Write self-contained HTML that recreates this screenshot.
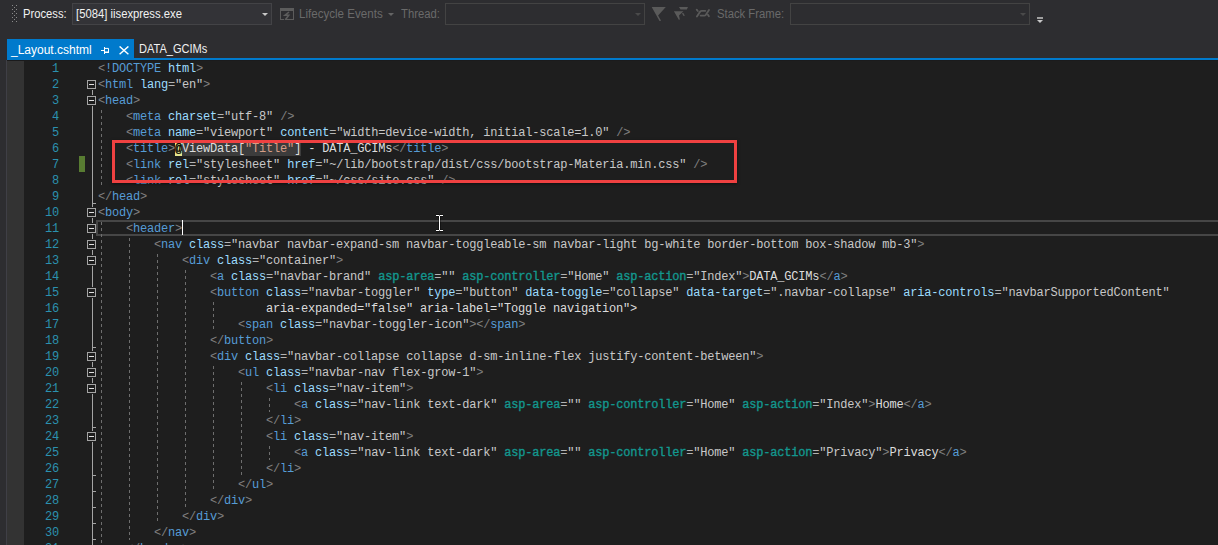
<!DOCTYPE html>
<html><head><meta charset="utf-8"><style>
*{margin:0;padding:0;box-sizing:border-box}
html,body{width:1218px;height:545px;overflow:hidden}
body{position:relative;background:#2d2d30;font-family:"Liberation Sans",sans-serif}
.a{position:absolute}
.ui{font-size:12px;white-space:nowrap;line-height:14px}
.dd{position:absolute;height:22px;border:1px solid #434346;background:#333337}
.arr{position:absolute;width:0;height:0;border-left:3px solid transparent;border-right:3px solid transparent;border-top:3px solid #999}
.ed{position:absolute;left:7px;top:60px;width:1211px;height:485px;background:#1e1e1e;overflow:hidden}
.ln{position:absolute;left:91px;height:16px;line-height:16px;white-space:pre;font-family:"Liberation Mono",monospace;font-size:12px;letter-spacing:-0.2px;color:#dcdcdc}
.nm{position:absolute;left:0;width:52px;text-align:right;height:16px;line-height:16px;font-family:"Liberation Mono",monospace;font-size:12px;letter-spacing:-0.2px;color:#2b91af}
i{font-style:normal}
.d{color:#808080}.t{color:#569cd6}.aa{color:#9cdcfe}.o{color:#b4b4b4}.v{color:#c8c8c8}.x{color:#dcdcdc}
.h{color:#13978e;-webkit-text-stroke:0.35px #13978e}
.rz{background:#e4e48e;color:#000;-webkit-text-stroke:0.4px #000}
.rzv{background:#3c3c3c;color:#dcdcdc}.rzo{background:#3c3c3c;color:#dcdcdc}.rzs{background:#3c3c3c;color:#d69d85}
.box{position:absolute;left:80px;width:9px;height:9px;border:1px solid #a5a5a5;background:#1e1e1e;box-shadow:0 -1px 0 #1e1e1e,0 1px 0 #1e1e1e}
.box::after{content:"";position:absolute;left:1px;top:3px;width:5px;height:1px;background:#e0e0e0}
.vl{position:absolute;left:85px;width:1px;background:#a5a5a5}
.tk{position:absolute;left:85px;width:4px;height:1px;background:#a5a5a5}
.ig{position:absolute;width:1px;background-image:linear-gradient(to bottom,#6e6e6e 0,#6e6e6e 3px,transparent 3px,transparent 6px);background-size:1px 6px}
</style></head><body>
<div class="a" style="left:12px;top:5px;width:1px;height:1px;background:#8a8a8a"></div>
<div class="a" style="left:16px;top:5px;width:1px;height:1px;background:#8a8a8a"></div>
<div class="a" style="left:12px;top:9px;width:1px;height:1px;background:#8a8a8a"></div>
<div class="a" style="left:16px;top:9px;width:1px;height:1px;background:#8a8a8a"></div>
<div class="a" style="left:12px;top:13px;width:1px;height:1px;background:#8a8a8a"></div>
<div class="a" style="left:16px;top:13px;width:1px;height:1px;background:#8a8a8a"></div>
<div class="a" style="left:12px;top:17px;width:1px;height:1px;background:#8a8a8a"></div>
<div class="a" style="left:16px;top:17px;width:1px;height:1px;background:#8a8a8a"></div>
<div class="a" style="left:12px;top:21px;width:1px;height:1px;background:#8a8a8a"></div>
<div class="a" style="left:16px;top:21px;width:1px;height:1px;background:#8a8a8a"></div>
<div class="a" style="left:14px;top:7px;width:1px;height:1px;background:#8a8a8a"></div>
<div class="a" style="left:14px;top:11px;width:1px;height:1px;background:#8a8a8a"></div>
<div class="a" style="left:14px;top:15px;width:1px;height:1px;background:#8a8a8a"></div>
<div class="a" style="left:14px;top:19px;width:1px;height:1px;background:#8a8a8a"></div>
<div class="a ui" style="left:23px;top:7px;color:#f1f1f1;transform:scaleX(0.935);transform-origin:0 0">Process:</div>
<div class="dd" style="left:72px;top:3px;width:200px"></div>
<div class="a ui" style="left:76px;top:7px;color:#f1f1f1;transform:scaleX(0.94);transform-origin:0 0">[5084] iisexpress.exe</div>
<div class="arr" style="left:262px;top:13px;border-top-color:#c8c8c8"></div>
<svg class="a" style="left:280px;top:8px" width="14" height="12" viewBox="0 0 14 12"><path fill="#5c5c5c" d="M0 0H14V12H6V11H13V3H1V11H4V12H0Z"/><path fill="none" stroke="#5c5c5c" stroke-width="1.6" d="M9 4L5 7.3H8.7L5.2 12"/></svg>
<div class="a ui" style="left:299px;top:7px;color:#6a6a6a;transform:scaleX(0.965);transform-origin:0 0">Lifecycle Events</div>
<div class="arr" style="left:388px;top:13px;border-top-color:#656565"></div>
<div class="a ui" style="left:401px;top:7px;color:#6a6a6a;transform:scaleX(0.94);transform-origin:0 0">Thread:</div>
<div class="dd" style="left:445px;top:3px;width:200px;border-color:#434343;background:#2d2d30"></div>
<div class="arr" style="left:635px;top:13px;border-top-color:#4a4a4a"></div>
<svg class="a" style="left:646px;top:2px" width="70" height="24" viewBox="646 2 70 24"><g fill="#5a5a5a"><path d="M651.7 6.9H665.8L658.1 15.5L661.1 20.7L659.5 21Z"/><path d="M679 6.9H688L686.8 9.5H680.5Z"/><path d="M673.9 11.2H683.4L679 15.5L679.9 19.5L678.8 19.8Z"/><path d="M681.9 13.2L683.4 12.9L684.8 15.8L683.6 16.1Z"/></g><g fill="none" stroke="#5a5a5a" stroke-width="1.8" stroke-linecap="round"><path d="M696.9 16.6L700.3 11.4Q700.8 10.8 701.8 10.8L705.3 10.8"/><path d="M700.6 15.6L704.2 15.6Q705.2 15.6 705.7 15L709 10"/><path d="M696.7 9.7L697.8 11"/><path d="M707.9 14.8L708.9 16.3"/></g></svg>
<div class="a ui" style="left:717px;top:7px;color:#6a6a6a;transform:scaleX(0.94);transform-origin:0 0">Stack Frame:</div>
<div class="dd" style="left:790px;top:3px;width:240px;border-color:#434343;background:#2d2d30"></div>
<div class="arr" style="left:1020px;top:13px;border-top-color:#4a4a4a"></div>
<div class="a" style="left:1037px;top:17px;width:6px;height:2px;background:#a0a0a0"></div>
<div class="arr" style="left:1037px;top:20px;border-top-color:#c8c8c8;border-left-width:3px;border-right-width:3px;border-top-width:3px"></div>
<div class="a" style="left:7px;top:39px;width:127px;height:21px;background:#007acc"></div>
<div class="a" style="left:7px;top:58px;width:1211px;height:2px;background:#007acc"></div>
<div class="a ui" style="left:11px;top:43px;color:#ffffff">_Layout.cshtml</div>
<svg class="a" style="left:101px;top:46px" width="9" height="9" viewBox="0 0 9 9"><path d="M0 4.5H3.5M3.5 1V8M3.5 2.4H7.5V6.2H3.5" stroke="#ffffff" stroke-width="1" fill="none"/><rect x="3.5" y="5.7" width="4.5" height="1.3" fill="#fff"/></svg>
<svg class="a" style="left:119px;top:46px" width="10" height="9" viewBox="0 0 10 9"><path d="M0.6 0.4L9.4 8.2M9.4 0.4L0.6 8.2" stroke="#ffffff" stroke-width="1.4" fill="none"/></svg>
<div class="a ui" style="left:139px;top:42px;color:#f1f1f1;transform:scaleX(0.92);transform-origin:0 0">DATA_GCIMs</div>
<div class="a" style="left:6px;top:60px;width:1px;height:485px;background:#3f3f46"></div>
<div class="ed">
<div class="a" style="left:0;top:0;width:17px;height:485px;background:#333333"></div>
<div class="a" style="left:0;top:0;width:1211px;height:1px;background:#1b1b1c"></div>
<div class="a" style="left:89px;top:160px;width:1200px;height:16px;border:2px solid #464646;border-right:none"></div>
<div class="a" style="left:72px;top:96px;width:6px;height:16px;background:#587c32"></div>
<div class="ig" style="left:94px;top:48px;height:16px;background-position:0 2px"></div>
<div class="ig" style="left:94px;top:64px;height:16px;background-position:0 4px"></div>
<div class="ig" style="left:94px;top:80px;height:16px;background-position:0 0px"></div>
<div class="ig" style="left:94px;top:96px;height:16px;background-position:0 2px"></div>
<div class="ig" style="left:94px;top:112px;height:16px;background-position:0 4px"></div>
<div class="ig" style="left:94px;top:160px;height:16px;background-position:0 2px"></div>
<div class="ig" style="left:94px;top:176px;height:16px;background-position:0 4px"></div>
<div class="ig" style="left:94px;top:192px;height:16px;background-position:0 0px"></div>
<div class="ig" style="left:94px;top:208px;height:16px;background-position:0 2px"></div>
<div class="ig" style="left:94px;top:224px;height:16px;background-position:0 4px"></div>
<div class="ig" style="left:94px;top:240px;height:16px;background-position:0 0px"></div>
<div class="ig" style="left:94px;top:256px;height:16px;background-position:0 2px"></div>
<div class="ig" style="left:94px;top:272px;height:16px;background-position:0 4px"></div>
<div class="ig" style="left:94px;top:288px;height:16px;background-position:0 0px"></div>
<div class="ig" style="left:94px;top:304px;height:16px;background-position:0 2px"></div>
<div class="ig" style="left:94px;top:320px;height:16px;background-position:0 4px"></div>
<div class="ig" style="left:94px;top:336px;height:16px;background-position:0 0px"></div>
<div class="ig" style="left:94px;top:352px;height:16px;background-position:0 2px"></div>
<div class="ig" style="left:94px;top:368px;height:16px;background-position:0 4px"></div>
<div class="ig" style="left:94px;top:384px;height:16px;background-position:0 0px"></div>
<div class="ig" style="left:94px;top:400px;height:16px;background-position:0 2px"></div>
<div class="ig" style="left:94px;top:416px;height:16px;background-position:0 4px"></div>
<div class="ig" style="left:94px;top:432px;height:16px;background-position:0 0px"></div>
<div class="ig" style="left:94px;top:448px;height:16px;background-position:0 2px"></div>
<div class="ig" style="left:94px;top:464px;height:16px;background-position:0 4px"></div>
<div class="ig" style="left:94px;top:480px;height:16px;background-position:0 0px"></div>
<div class="ig" style="left:122px;top:176px;height:16px;background-position:0 2px"></div>
<div class="ig" style="left:122px;top:192px;height:16px;background-position:0 4px"></div>
<div class="ig" style="left:122px;top:208px;height:16px;background-position:0 0px"></div>
<div class="ig" style="left:122px;top:224px;height:16px;background-position:0 2px"></div>
<div class="ig" style="left:122px;top:240px;height:16px;background-position:0 4px"></div>
<div class="ig" style="left:122px;top:256px;height:16px;background-position:0 0px"></div>
<div class="ig" style="left:122px;top:272px;height:16px;background-position:0 2px"></div>
<div class="ig" style="left:122px;top:288px;height:16px;background-position:0 4px"></div>
<div class="ig" style="left:122px;top:304px;height:16px;background-position:0 0px"></div>
<div class="ig" style="left:122px;top:320px;height:16px;background-position:0 2px"></div>
<div class="ig" style="left:122px;top:336px;height:16px;background-position:0 4px"></div>
<div class="ig" style="left:122px;top:352px;height:16px;background-position:0 0px"></div>
<div class="ig" style="left:122px;top:368px;height:16px;background-position:0 2px"></div>
<div class="ig" style="left:122px;top:384px;height:16px;background-position:0 4px"></div>
<div class="ig" style="left:122px;top:400px;height:16px;background-position:0 0px"></div>
<div class="ig" style="left:122px;top:416px;height:16px;background-position:0 2px"></div>
<div class="ig" style="left:122px;top:432px;height:16px;background-position:0 4px"></div>
<div class="ig" style="left:122px;top:448px;height:16px;background-position:0 0px"></div>
<div class="ig" style="left:122px;top:464px;height:16px;background-position:0 2px"></div>
<div class="ig" style="left:150px;top:192px;height:16px;background-position:0 2px"></div>
<div class="ig" style="left:150px;top:208px;height:16px;background-position:0 4px"></div>
<div class="ig" style="left:150px;top:224px;height:16px;background-position:0 0px"></div>
<div class="ig" style="left:150px;top:240px;height:16px;background-position:0 2px"></div>
<div class="ig" style="left:150px;top:256px;height:16px;background-position:0 4px"></div>
<div class="ig" style="left:150px;top:272px;height:16px;background-position:0 0px"></div>
<div class="ig" style="left:150px;top:288px;height:16px;background-position:0 2px"></div>
<div class="ig" style="left:150px;top:304px;height:16px;background-position:0 4px"></div>
<div class="ig" style="left:150px;top:320px;height:16px;background-position:0 0px"></div>
<div class="ig" style="left:150px;top:336px;height:16px;background-position:0 2px"></div>
<div class="ig" style="left:150px;top:352px;height:16px;background-position:0 4px"></div>
<div class="ig" style="left:150px;top:368px;height:16px;background-position:0 0px"></div>
<div class="ig" style="left:150px;top:384px;height:16px;background-position:0 2px"></div>
<div class="ig" style="left:150px;top:400px;height:16px;background-position:0 4px"></div>
<div class="ig" style="left:150px;top:416px;height:16px;background-position:0 0px"></div>
<div class="ig" style="left:150px;top:432px;height:16px;background-position:0 2px"></div>
<div class="ig" style="left:150px;top:448px;height:16px;background-position:0 4px"></div>
<div class="ig" style="left:178px;top:208px;height:16px;background-position:0 2px"></div>
<div class="ig" style="left:178px;top:224px;height:16px;background-position:0 4px"></div>
<div class="ig" style="left:178px;top:240px;height:16px;background-position:0 0px"></div>
<div class="ig" style="left:178px;top:256px;height:16px;background-position:0 2px"></div>
<div class="ig" style="left:178px;top:272px;height:16px;background-position:0 4px"></div>
<div class="ig" style="left:178px;top:288px;height:16px;background-position:0 0px"></div>
<div class="ig" style="left:178px;top:304px;height:16px;background-position:0 2px"></div>
<div class="ig" style="left:178px;top:320px;height:16px;background-position:0 4px"></div>
<div class="ig" style="left:178px;top:336px;height:16px;background-position:0 0px"></div>
<div class="ig" style="left:178px;top:352px;height:16px;background-position:0 2px"></div>
<div class="ig" style="left:178px;top:368px;height:16px;background-position:0 4px"></div>
<div class="ig" style="left:178px;top:384px;height:16px;background-position:0 0px"></div>
<div class="ig" style="left:178px;top:400px;height:16px;background-position:0 2px"></div>
<div class="ig" style="left:178px;top:416px;height:16px;background-position:0 4px"></div>
<div class="ig" style="left:178px;top:432px;height:16px;background-position:0 0px"></div>
<div class="ig" style="left:206px;top:240px;height:16px;background-position:0 2px"></div>
<div class="ig" style="left:206px;top:256px;height:16px;background-position:0 4px"></div>
<div class="ig" style="left:206px;top:304px;height:16px;background-position:0 2px"></div>
<div class="ig" style="left:206px;top:320px;height:16px;background-position:0 4px"></div>
<div class="ig" style="left:206px;top:336px;height:16px;background-position:0 0px"></div>
<div class="ig" style="left:206px;top:352px;height:16px;background-position:0 2px"></div>
<div class="ig" style="left:206px;top:368px;height:16px;background-position:0 4px"></div>
<div class="ig" style="left:206px;top:384px;height:16px;background-position:0 0px"></div>
<div class="ig" style="left:206px;top:400px;height:16px;background-position:0 2px"></div>
<div class="ig" style="left:206px;top:416px;height:16px;background-position:0 4px"></div>
<div class="ig" style="left:234px;top:320px;height:16px;background-position:0 2px"></div>
<div class="ig" style="left:234px;top:336px;height:16px;background-position:0 4px"></div>
<div class="ig" style="left:234px;top:352px;height:16px;background-position:0 0px"></div>
<div class="ig" style="left:234px;top:368px;height:16px;background-position:0 2px"></div>
<div class="ig" style="left:234px;top:384px;height:16px;background-position:0 4px"></div>
<div class="ig" style="left:234px;top:400px;height:16px;background-position:0 0px"></div>
<div class="ig" style="left:262px;top:336px;height:16px;background-position:0 2px"></div>
<div class="ig" style="left:262px;top:384px;height:16px;background-position:0 2px"></div>
<div class="vl" style="top:29px;height:456px"></div>
<div class="tk" style="top:143px"></div>
<div class="tk" style="top:287px"></div>
<div class="tk" style="top:367px"></div>
<div class="tk" style="top:415px"></div>
<div class="tk" style="top:431px"></div>
<div class="tk" style="top:447px"></div>
<div class="tk" style="top:463px"></div>
<div class="tk" style="top:479px"></div>
<div class="box" style="top:20px"></div>
<div class="box" style="top:36px"></div>
<div class="box" style="top:148px"></div>
<div class="box" style="top:164px"></div>
<div class="box" style="top:180px"></div>
<div class="box" style="top:196px"></div>
<div class="box" style="top:228px"></div>
<div class="box" style="top:292px"></div>
<div class="box" style="top:308px"></div>
<div class="box" style="top:324px"></div>
<div class="box" style="top:372px"></div>
<div class="nm" style="top:1px">1</div>
<div class="ln" style="top:1px"><i class="d">&lt;</i><i class="t">!</i><i class="t">DOCTYPE</i> <i class="aa">html</i><i class="d">&gt;</i></div>
<div class="nm" style="top:17px">2</div>
<div class="ln" style="top:17px"><i class="d">&lt;</i><i class="t">html</i> <i class="aa">lang</i><i class="o">=</i><i class="v">"en"</i><i class="d">&gt;</i></div>
<div class="nm" style="top:33px">3</div>
<div class="ln" style="top:33px"><i class="d">&lt;</i><i class="t">head</i><i class="d">&gt;</i></div>
<div class="nm" style="top:49px">4</div>
<div class="ln" style="top:49px">    <i class="d">&lt;</i><i class="t">meta</i> <i class="aa">charset</i><i class="o">=</i><i class="v">"utf-8"</i> <i class="d">/&gt;</i></div>
<div class="nm" style="top:65px">5</div>
<div class="ln" style="top:65px">    <i class="d">&lt;</i><i class="t">meta</i> <i class="aa">name</i><i class="o">=</i><i class="v">"viewport"</i> <i class="aa">content</i><i class="o">=</i><i class="v">"width=device-width, initial-scale=1.0"</i> <i class="d">/&gt;</i></div>
<div class="nm" style="top:81px">6</div>
<div class="ln" style="top:81px">    <i class="d">&lt;</i><i class="t">title</i><i class="d">&gt;</i><i class="rz">@</i><i class="rzv">ViewData</i><i class="rzo">[</i><i class="rzs">"Title"</i><i class="rzo">]</i> <i class="x">- DATA_GCIMs</i><i class="d">&lt;/</i><i class="t">title</i><i class="d">&gt;</i></div>
<div class="nm" style="top:97px">7</div>
<div class="ln" style="top:97px">    <i class="d">&lt;</i><i class="t">link</i> <i class="aa">rel</i><i class="o">=</i><i class="v">"stylesheet"</i> <i class="aa">href</i><i class="o">=</i><i class="v">"~/lib/bootstrap/dist/css/bootstrap-Materia.min.css"</i> <i class="d">/&gt;</i></div>
<div class="nm" style="top:113px">8</div>
<div class="ln" style="top:113px">    <i class="d">&lt;</i><i class="t">link</i> <i class="aa">rel</i><i class="o">=</i><i class="v">"stylesheet"</i> <i class="aa">href</i><i class="o">=</i><i class="v">"~/css/site.css"</i> <i class="d">/&gt;</i></div>
<div class="nm" style="top:129px">9</div>
<div class="ln" style="top:129px"><i class="d">&lt;/</i><i class="t">head</i><i class="d">&gt;</i></div>
<div class="nm" style="top:145px">10</div>
<div class="ln" style="top:145px"><i class="d">&lt;</i><i class="t">body</i><i class="d">&gt;</i></div>
<div class="nm" style="top:161px">11</div>
<div class="ln" style="top:161px">    <i class="d">&lt;</i><i class="t">header</i><i class="d">&gt;</i></div>
<div class="nm" style="top:177px">12</div>
<div class="ln" style="top:177px">        <i class="d">&lt;</i><i class="t">nav</i> <i class="aa">class</i><i class="o">=</i><i class="v">"navbar navbar-expand-sm navbar-toggleable-sm navbar-light bg-white border-bottom box-shadow mb-3"</i><i class="d">&gt;</i></div>
<div class="nm" style="top:193px">13</div>
<div class="ln" style="top:193px">            <i class="d">&lt;</i><i class="t">div</i> <i class="aa">class</i><i class="o">=</i><i class="v">"container"</i><i class="d">&gt;</i></div>
<div class="nm" style="top:209px">14</div>
<div class="ln" style="top:209px">                <i class="d">&lt;</i><i class="t">a</i> <i class="aa">class</i><i class="o">=</i><i class="v">"navbar-brand"</i> <i class="h">asp-area</i><i class="o">=</i><i class="v">""</i> <i class="h">asp-controller</i><i class="o">=</i><i class="v">"Home"</i> <i class="h">asp-action</i><i class="o">=</i><i class="v">"Index"</i><i class="d">&gt;</i><i class="x">DATA_GCIMs</i><i class="d">&lt;/</i><i class="t">a</i><i class="d">&gt;</i></div>
<div class="nm" style="top:225px">15</div>
<div class="ln" style="top:225px">                <i class="d">&lt;</i><i class="t">button</i> <i class="aa">class</i><i class="o">=</i><i class="v">"navbar-toggler"</i> <i class="aa">type</i><i class="o">=</i><i class="v">"button"</i> <i class="aa">data-toggle</i><i class="o">=</i><i class="v">"collapse"</i> <i class="aa">data-target</i><i class="o">=</i><i class="v">".navbar-collapse"</i> <i class="aa">aria-controls</i><i class="o">=</i><i class="v">"navbarSupportedContent"</i></div>
<div class="nm" style="top:241px">16</div>
<div class="ln" style="top:241px">                        <i class="x">aria-expanded="false" aria-label="Toggle navigation"&gt;</i></div>
<div class="nm" style="top:257px">17</div>
<div class="ln" style="top:257px">                    <i class="d">&lt;</i><i class="t">span</i> <i class="aa">class</i><i class="o">=</i><i class="v">"navbar-toggler-icon"</i><i class="d">&gt;</i><i class="d">&lt;/</i><i class="t">span</i><i class="d">&gt;</i></div>
<div class="nm" style="top:273px">18</div>
<div class="ln" style="top:273px">                <i class="d">&lt;/</i><i class="t">button</i><i class="d">&gt;</i></div>
<div class="nm" style="top:289px">19</div>
<div class="ln" style="top:289px">                <i class="d">&lt;</i><i class="t">div</i> <i class="aa">class</i><i class="o">=</i><i class="v">"navbar-collapse collapse d-sm-inline-flex justify-content-between"</i><i class="d">&gt;</i></div>
<div class="nm" style="top:305px">20</div>
<div class="ln" style="top:305px">                    <i class="d">&lt;</i><i class="t">ul</i> <i class="aa">class</i><i class="o">=</i><i class="v">"navbar-nav flex-grow-1"</i><i class="d">&gt;</i></div>
<div class="nm" style="top:321px">21</div>
<div class="ln" style="top:321px">                        <i class="d">&lt;</i><i class="t">li</i> <i class="aa">class</i><i class="o">=</i><i class="v">"nav-item"</i><i class="d">&gt;</i></div>
<div class="nm" style="top:337px">22</div>
<div class="ln" style="top:337px">                            <i class="d">&lt;</i><i class="t">a</i> <i class="aa">class</i><i class="o">=</i><i class="v">"nav-link text-dark"</i> <i class="h">asp-area</i><i class="o">=</i><i class="v">""</i> <i class="h">asp-controller</i><i class="o">=</i><i class="v">"Home"</i> <i class="h">asp-action</i><i class="o">=</i><i class="v">"Index"</i><i class="d">&gt;</i><i class="x">Home</i><i class="d">&lt;/</i><i class="t">a</i><i class="d">&gt;</i></div>
<div class="nm" style="top:353px">23</div>
<div class="ln" style="top:353px">                        <i class="d">&lt;/</i><i class="t">li</i><i class="d">&gt;</i></div>
<div class="nm" style="top:369px">24</div>
<div class="ln" style="top:369px">                        <i class="d">&lt;</i><i class="t">li</i> <i class="aa">class</i><i class="o">=</i><i class="v">"nav-item"</i><i class="d">&gt;</i></div>
<div class="nm" style="top:385px">25</div>
<div class="ln" style="top:385px">                            <i class="d">&lt;</i><i class="t">a</i> <i class="aa">class</i><i class="o">=</i><i class="v">"nav-link text-dark"</i> <i class="h">asp-area</i><i class="o">=</i><i class="v">""</i> <i class="h">asp-controller</i><i class="o">=</i><i class="v">"Home"</i> <i class="h">asp-action</i><i class="o">=</i><i class="v">"Privacy"</i><i class="d">&gt;</i><i class="x">Privacy</i><i class="d">&lt;/</i><i class="t">a</i><i class="d">&gt;</i></div>
<div class="nm" style="top:401px">26</div>
<div class="ln" style="top:401px">                        <i class="d">&lt;/</i><i class="t">li</i><i class="d">&gt;</i></div>
<div class="nm" style="top:417px">27</div>
<div class="ln" style="top:417px">                    <i class="d">&lt;/</i><i class="t">ul</i><i class="d">&gt;</i></div>
<div class="nm" style="top:433px">28</div>
<div class="ln" style="top:433px">                <i class="d">&lt;/</i><i class="t">div</i><i class="d">&gt;</i></div>
<div class="nm" style="top:449px">29</div>
<div class="ln" style="top:449px">            <i class="d">&lt;/</i><i class="t">div</i><i class="d">&gt;</i></div>
<div class="nm" style="top:465px">30</div>
<div class="ln" style="top:465px">        <i class="d">&lt;/</i><i class="t">nav</i><i class="d">&gt;</i></div>
<div class="nm" style="top:481px">31</div>
<div class="ln" style="top:481px">    <i class="d">&lt;/</i><i class="t">header</i><i class="d">&gt;</i></div>
<div class="a" style="left:175px;top:160px;width:1px;height:15px;background:#ffffff"></div>
</div>
<div class="a" style="left:112px;top:140px;width:625px;height:43px;border:3px solid #ef4141;box-shadow:0 1px 3px rgba(0,0,0,0.5)"></div>
<svg class="a" style="left:434px;top:213px" width="11" height="20" viewBox="0 0 11 20"><path d="M2 2.5 H5.5 M5.5 2.5 H9 M5.5 2.5 V17.5 M2 17.5 H5.5 M5.5 17.5 H9" stroke="#000" stroke-width="2" stroke-opacity="0.7" fill="none"/><path d="M2 2.5 H5 M6 2.5 H9 M5.5 2.5 V17.5 M2 17.5 H5 M6 17.5 H9" stroke="#fff" stroke-width="1" fill="none"/></svg>
</body></html>
